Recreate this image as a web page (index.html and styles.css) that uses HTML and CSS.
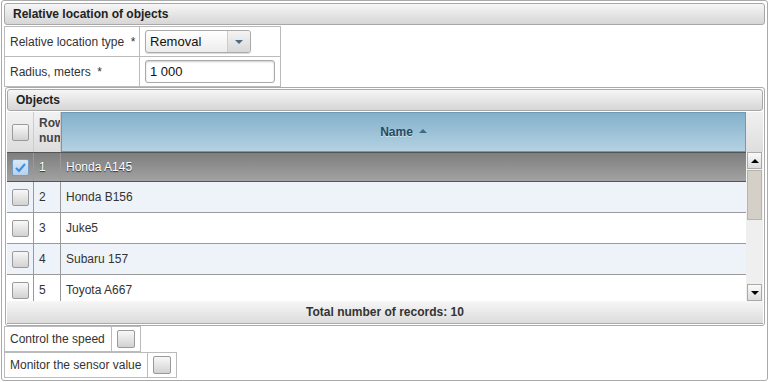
FILE: index.html
```html
<!DOCTYPE html>
<html lang="en">
<head>
    <meta charset="UTF-8">
    <title>Relative location of objects</title>
    <link rel="stylesheet" href="styles.css">
</head>
<body>
    <div class="frame">
        <div class="bar">Relative location of objects</div>
        <table class="form">
            <tr>
                <td class="lbl lbl-wide">Relative location type &nbsp;*</td>
                <td class="val">
                    <div class="select">
                        <span class="select-text">Removal</span>
                        <span class="select-btn"><span class="tri-down"></span></span>
                    </div>
                </td>
            </tr>
            <tr>
                <td class="lbl">Radius, meters &nbsp;*</td>
                <td class="val"><input type="text" class="field" value="1 000"></td>
            </tr>
        </table>

        <div class="panel">
            <div class="bar">Objects</div>
            <div class="grid">
                <div class="grid-head">
                    <div class="h-check"><span class="box"></span></div>
                    <div class="h-num">Row number</div>
                    <div class="h-name">Name <span class="tri-up"></span></div>
                    <div class="h-scroll"></div>
                </div>
                <div class="grid-body">
                    <div class="rows">
                        <div class="row selected">
                            <div class="c-check"><span class="box checked">
                                <svg width="13" height="11" viewBox="0 0 13 11"><path d="M2 6 L5 9 L11 2" fill="none" stroke="#3a8ee6" stroke-width="2"/></svg>
                            </span></div>
                            <div class="c-num">1</div>
                            <div class="c-name">Honda A145</div>
                        </div>
                        <div class="row alt">
                            <div class="c-check"><span class="box"></span></div>
                            <div class="c-num">2</div>
                            <div class="c-name">Honda B156</div>
                        </div>
                        <div class="row">
                            <div class="c-check"><span class="box"></span></div>
                            <div class="c-num">3</div>
                            <div class="c-name">Juke5</div>
                        </div>
                        <div class="row alt">
                            <div class="c-check"><span class="box"></span></div>
                            <div class="c-num">4</div>
                            <div class="c-name">Subaru 157</div>
                        </div>
                        <div class="row">
                            <div class="c-check"><span class="box"></span></div>
                            <div class="c-num">5</div>
                            <div class="c-name">Toyota A667</div>
                        </div>
                    </div>
                    <div class="scrollbar">
                        <div class="sb-btn"><span class="tri-up dark"></span></div>
                        <div class="sb-thumb"></div>
                        <div class="sb-track"></div>
                        <div class="sb-btn"><span class="tri-down dark"></span></div>
                    </div>
                </div>
                <div class="grid-foot">Total number of records: 10</div>
            </div>
        </div>

        <table class="opts">
            <tr>
                <td class="opt-lbl">Control the speed</td>
                <td class="opt-val"><span class="box"></span></td>
            </tr>
        </table>
        <table class="opts">
            <tr>
                <td class="opt-lbl">Monitor the sensor value</td>
                <td class="opt-val"><span class="box"></span></td>
            </tr>
        </table>
    </div>
</body>
</html>
```

FILE: styles.css
```css
body {
    margin: 0;
    padding: 0;
    background-color: #fff;
    font-family: "Liberation Sans", Arial, sans-serif;
    font-size: 12px;
    color: #333;
}
.frame {
    margin-left: 1px;
    width: 761px;
    height: 375px;
    padding: 2px;
    border: 1px solid #aaa;
    border-radius: 3px;
}
.bar {
    height: 20px;
    line-height: 20px;
    padding-left: 8px;
    border: 1px solid #a8a8a8;
    border-radius: 3px;
    background: linear-gradient(#f6f6f6, #d6d6d6);
    font-weight: bold;
    color: #222;
}
/* form */
.form {
    border-collapse: collapse;
    margin-top: 1px;
}
.form td {
    border: 1px solid #bbb;
    height: 29px;
    padding: 0;
}
.lbl {
    width: 129px;
    padding-left: 5px !important;
    color: #333;
}
.val {
    width: 135px;
    padding-left: 5px !important;
}
.select {
    display: flex;
    width: 104px;
    height: 21px;
    border: 1px solid #aaa;
    border-radius: 3px;
    background: linear-gradient(#fff, #ececec);
    box-shadow: 0 1px 1px rgba(0, 0, 0, 0.15);
}
.select-text {
    flex: 1;
    line-height: 21px;
    padding-left: 4px;
    color: #111;
    font-size: 13px;
}
.select-btn {
    width: 22px;
    border-left: 1px solid #ccc;
    display: flex;
    align-items: center;
    justify-content: center;
    background: linear-gradient(#f4f4f4, #d8d8d8);
    border-radius: 0 3px 3px 0;
}
.tri-down {
    width: 0;
    height: 0;
    border-left: 4px solid transparent;
    border-right: 4px solid transparent;
    border-top: 4px solid #4a6b86;
}
.tri-up {
    display: inline-block;
    width: 0;
    height: 0;
    border-left: 4px solid transparent;
    border-right: 4px solid transparent;
    border-bottom: 4px solid #3d6a86;
    vertical-align: middle;
    margin-left: 6px;
    margin-top: -2px;
}
.tri-down.dark {
    border-top-color: #000;
}
.tri-up.dark {
    border-bottom-color: #000;
    margin: 0;
}
.field {
    width: 130px;
    height: 23px;
    box-sizing: border-box;
    border: 1px solid #aaa;
    border-radius: 3px;
    box-shadow: inset 0 1px 2px rgba(0, 0, 0, 0.2);
    padding: 0 4px;
    font-family: "Liberation Sans", Arial, sans-serif;
    font-size: 13px;
    color: #111;
}
/* objects panel */
.panel {
    margin-left: 1px;
    padding: 1px;
    border: 1px solid #aaa;
    border-radius: 3px;
}
.grid {
    margin-top: 1px;
}
.grid-head {
    display: flex;
    height: 40px;
}
.h-check {
    width: 26px;
    border-right: 1px solid #ccc;
    background: linear-gradient(#f2f2f2, #dcdcdc);
    display: flex;
    align-items: center;
    justify-content: center;
}
.h-num {
    width: 27px;
    border-right: 1px solid #ccc;
    background: linear-gradient(#f2f2f2, #dcdcdc);
    overflow: hidden;
    font-weight: bold;
    color: #444;
    line-height: 15px;
    padding: 4px 0 0 5px;
    box-sizing: border-box;
}
.h-name {
    flex: 1;
    border: 1px solid #6e9ab6;
    background: linear-gradient(#84b0cb, #b4d2e2);
    display: flex;
    align-items: center;
    justify-content: center;
    font-weight: bold;
    color: #244a62;
    text-shadow: 0 1px 0 rgba(255, 255, 255, 0.5);
}
.h-scroll {
    width: 17px;
    background: linear-gradient(#f0f0f0, #dedede);
}
.grid-body {
    display: flex;
    height: 149px;
}
.rows {
    flex: 1;
    overflow: hidden;
}
.row {
    display: flex;
    flex-shrink: 0;
    height: 31px;
    border-bottom: 1px solid #9a9a9a;
    box-sizing: border-box;
    background-color: #fff;
}
.row.alt {
    background-color: #eef3f9;
}
.row.selected {
    height: 30px;
    background: linear-gradient(#7e7e7e, #a2a2a2);
    color: #fff;
    text-shadow: 0 1px 1px #333;
    border-top: 1px solid #555;
    border-bottom-color: #555;
}
.c-check {
    width: 26px;
    border-right: 1px solid #999;
    display: flex;
    align-items: center;
    justify-content: center;
}
.c-num {
    width: 21px;
    padding-left: 5px;
    border-right: 1px solid #999;
    line-height: 30px;
}
.c-name {
    flex: 1;
    padding-left: 5px;
    line-height: 30px;
}
.selected .c-num,
.selected .c-name {
    line-height: 28px;
}
.box {
    display: inline-block;
    width: 15px;
    height: 15px;
    border: 1px solid #9a9a9a;
    border-radius: 2px;
    background: linear-gradient(#f8f8f8, #d2d2d2);
    position: relative;
}
.box.checked {
    background: linear-gradient(#d8e8f6, #b8d2ea);
    border-color: #7a9cbc;
}
.box svg {
    position: absolute;
    left: 1px;
    top: 2px;
}
.scrollbar {
    width: 17px;
    display: flex;
    flex-direction: column;
    background-color: #f2f2f2;
}
.sb-btn {
    height: 15px;
    margin: 0 1px;
    border: 1px solid #aaa;
    background: linear-gradient(#fafafa, #dcdcdc);
    display: flex;
    align-items: center;
    justify-content: center;
}
.sb-thumb {
    height: 48px;
    margin: 1px 1px 0;
    border: 1px solid #b8b4ac;
    background-color: #d4d0c8;
}
.sb-track {
    flex: 1;
    background-color: #efefef;
    background-image: radial-gradient(#dcdcdc 0.6px, transparent 0.7px);
    background-size: 2px 2px;
}
.grid-foot {
    height: 22px;
    line-height: 22px;
    text-align: center;
    font-weight: bold;
    color: #333;
    background: linear-gradient(#f6f6f6, #dcdcdc);
    border-bottom: 1px solid #aaa;
}
/* options */
.opts {
    border-collapse: collapse;
}
.opts td {
    border: 1px solid #bbb;
    height: 24px;
    padding: 0;
}
.opt-lbl {
    padding: 0 6px 0 5px !important;
}
.opt-val {
    width: 28px;
    text-align: center;
}
.opt-val .box {
    width: 16px;
    height: 16px;
    vertical-align: middle;
}
```
